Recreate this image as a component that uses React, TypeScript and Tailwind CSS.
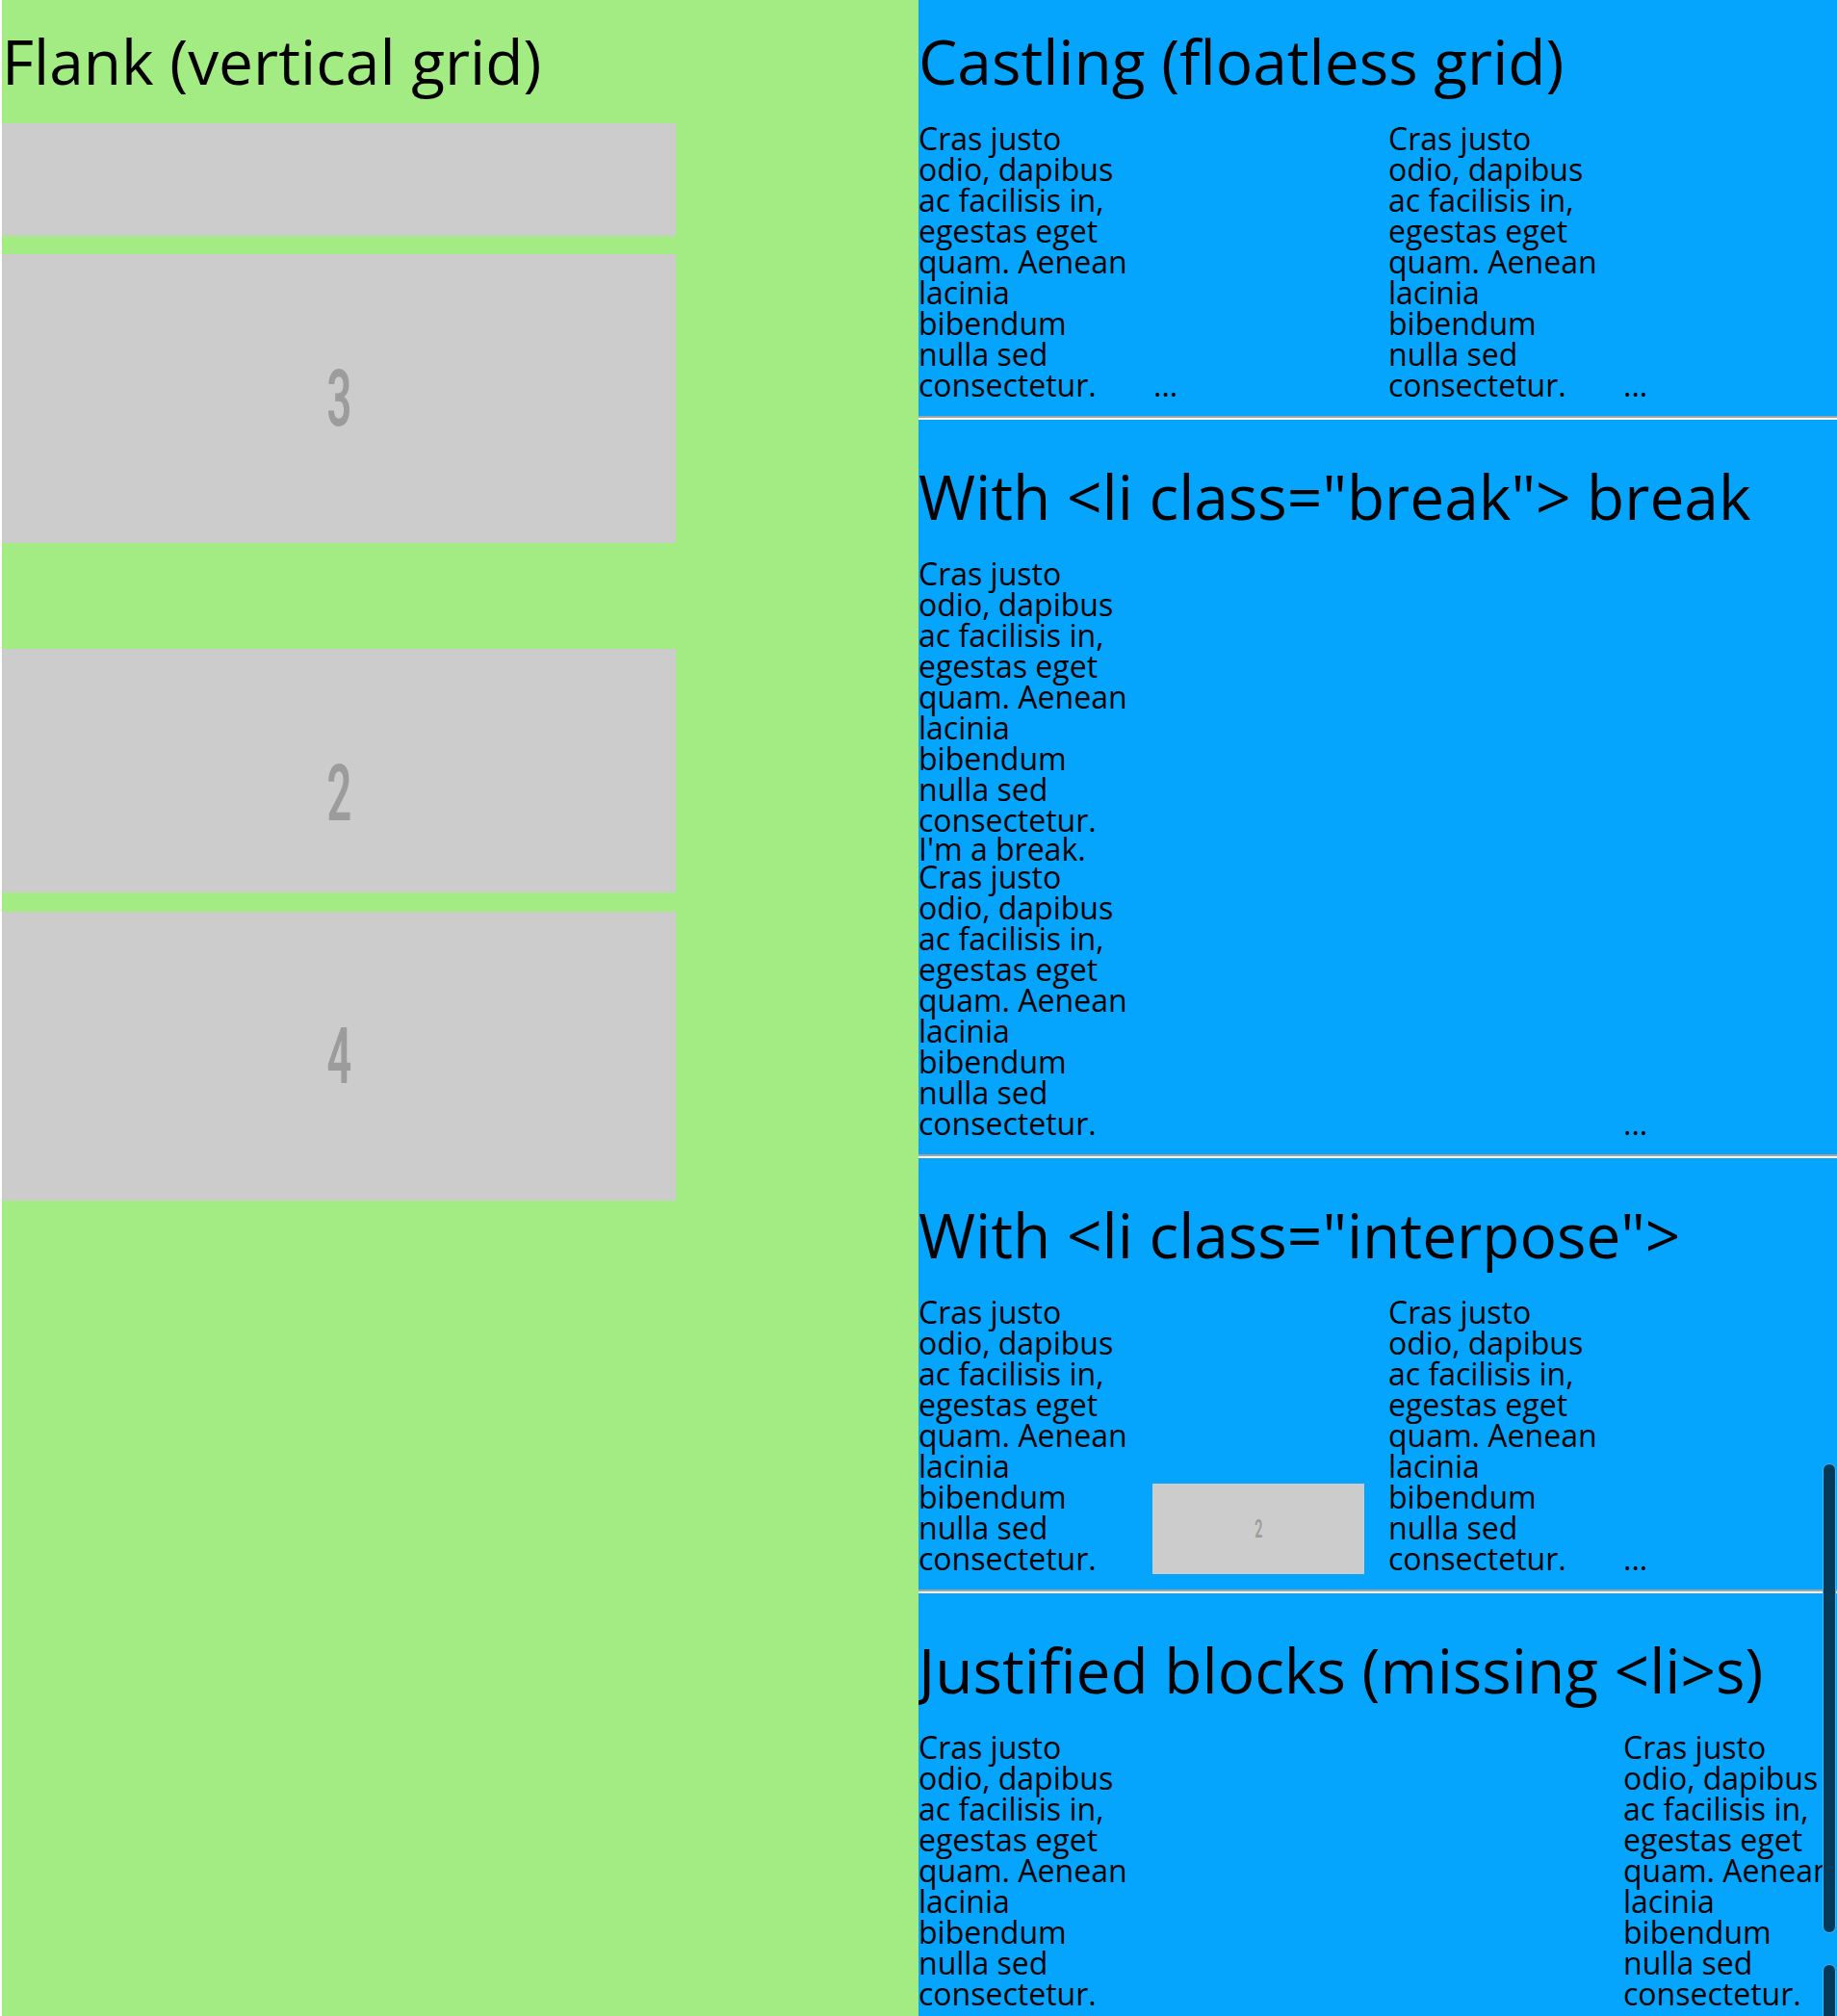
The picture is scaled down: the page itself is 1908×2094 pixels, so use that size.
const lorem = "Cras justo odio, dapibus ac facilisis in, egestas eget quam. Aenean lacinia bibendum nulla sed consectetur.";

function Lorem() {
  return <p className="w-[224px] text-[32px] leading-[32px]">{lorem}</p>;
}

function Dots() {
  return <div className="self-end h-[32px] text-[32px] leading-[32px]">...</div>;
}

function Title({ children }: { children: React.ReactNode }) {
  return (
    <div className="h-[128px] pt-[32px]">
      <h2 className="text-[64px] leading-[64px] whitespace-nowrap">{children}</h2>
    </div>
  );
}

function Rule() {
  return <div className="my-[16px] h-[4px] border-t-2 border-b-2 border-t-[#a3a3a3] border-b-white" />;
}

function Digit({ n, size }: { n: string; size: string }) {
  return (
    <span className={`inline-block scale-x-[0.55] font-['Roboto',sans-serif] font-semibold text-[#9c9c9c] ${size}`}>
      {n}
    </span>
  );
}

function FlankBox({ n, h, mt }: { n?: string; h: string; mt: string }) {
  return (
    <div className={`w-[700px] overflow-hidden bg-[#cccccc] ${h} ${mt}`}>
      <div className="flex h-[300px] items-center justify-center">
        {n && <Digit n={n} size="text-[82px] leading-[82px]" />}
      </div>
    </div>
  );
}

export default function App() {
  return (
    <div className="flex h-[2094px] w-[1908px] overflow-hidden bg-white font-['Open_Sans',sans-serif] text-black">
      <div className="w-[2px] bg-white" />

      {/* Flank */}
      <div className="w-[952px] bg-[#a3ec84]">
        <Title>Flank (vertical grid)</Title>
        <div className="flex flex-col">
          <FlankBox h="h-[117px]" mt="mt-0" />
          <FlankBox n="3" h="h-[300px]" mt="mt-[19px]" />
          <FlankBox n="2" h="h-[253px]" mt="mt-[110px]" />
          <FlankBox n="4" h="h-[300px]" mt="mt-[20px]" />
        </div>
      </div>

      {/* Castling */}
      <div className="relative w-[954px] overflow-hidden bg-[#05a5fd]">
        <section>
          <Title>Castling (floatless grid)</Title>
          <div className="grid grid-cols-[repeat(4,244px)]">
            <Lorem />
            <Dots />
            <Lorem />
            <Dots />
          </div>
        </section>
        <Rule />

        <section>
          <Title>With &lt;li class="break"&gt; break</Title>
          <div className="grid grid-cols-[repeat(4,244px)]">
            <div className="flex flex-col">
              <Lorem />
              <p className="h-[27px] text-[32px] leading-[27px] whitespace-nowrap">I'm a break.</p>
              <Lorem />
            </div>
            <div />
            <div />
            <Dots />
          </div>
        </section>
        <Rule />

        <section>
          <Title>With &lt;li class="interpose"&gt;</Title>
          <div className="grid grid-cols-[repeat(4,244px)]">
            <Lorem />
            <div className="self-end -ml-[1px] flex h-[94px] w-[220px] items-center justify-center bg-[#cccccc]">
              <Digit n="2" size="text-[26px] leading-[26px]" />
            </div>
            <Lorem />
            <Dots />
          </div>
        </section>
        <Rule />

        <section>
          <Title>Justified blocks (missing &lt;li&gt;s)</Title>
          <div className="grid grid-cols-[repeat(4,244px)]">
            <Lorem />
            <div />
            <div />
            <Lorem />
          </div>
        </section>

        {/* scrollbar */}
        <div className="absolute left-[939px] top-[1520px] h-[488px] w-[14px] rounded-full border border-[#3fb6f5] bg-[#043a59]" />
        <div className="absolute left-[939px] top-[2040px] h-[80px] w-[14px] rounded-t-full border border-[#3fb6f5] bg-[#043a59]" />
      </div>
    </div>
  );
}
